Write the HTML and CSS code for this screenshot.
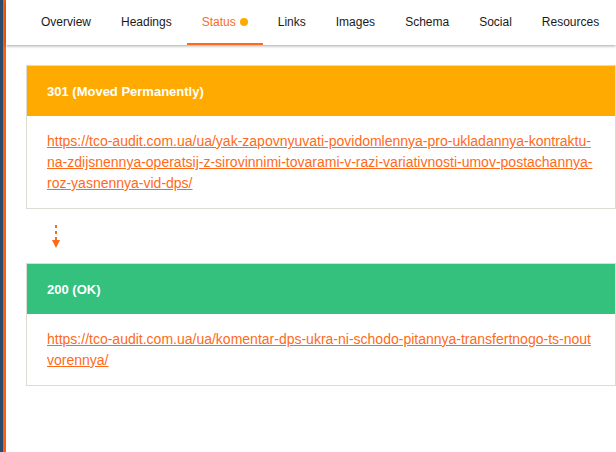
FILE: index.html
```html
<!DOCTYPE html>
<html lang="en">
<head>
  <meta charset="UTF-8" />
  <title>Status | Redirect chain</title>
  <link rel="stylesheet" href="styles.css">
</head>
<body>
  <div class="frame">
    <div class="host-edge"></div>
    <div class="panel">
      <nav class="tabs">
        <a class="tab" href="#">Overview</a>
        <a class="tab" href="#">Headings</a>
        <a class="tab active" href="#">Status <span class="dot"></span></a>
        <a class="tab" href="#">Links</a>
        <a class="tab" href="#">Images</a>
        <a class="tab" href="#">Schema</a>
        <a class="tab" href="#">Social</a>
        <a class="tab" href="#">Resources</a>
      </nav>

      <main class="status-view">
        <div class="hop redirect">
          <div class="hop-head">301 (Moved Permanently)</div>
          <div class="hop-body">
            <a href="#">https://tco-audit.com.ua/ua/yak-zapovnyuvati-povidomlennya-pro-ukladannya-kontraktu-na-zdijsnennya-operatsij-z-sirovinnimi-tovarami-v-razi-variativnosti-umov-postachannya-roz-yasnennya-vid-dps/</a>
          </div>
        </div>

        <!-- redirect arrow between hops -->
        <div class="hop-arrow">
          <svg width="10" height="24" viewBox="0 0 10 24">
            <line x1="5" y1="1" x2="5" y2="16" stroke="#ff6a1a" stroke-width="2" stroke-dasharray="3 3"/>
            <polygon points="1,16 9,16 5,24" fill="#ff6a1a"/>
          </svg>
        </div>

        <div class="hop ok">
          <div class="hop-head">200 (OK)</div>
          <div class="hop-body">
            <a href="#">https://tco-audit.com.ua/ua/komentar-dps-ukra-ni-schodo-pitannya-transfertnogo-ts-noutvorennya/</a>
          </div>
        </div>
      </main>
    </div>
  </div>
</body>
</html>
```

FILE: styles.css
```css
:root {
  --orange: #ff6a1a;
  --amber: #ffaa00;
  --green: #34c07d;
  --text: #1a1a1a;
  --border: #dedbd2;
}

* {
  box-sizing: border-box;
  margin: 0;
  padding: 0;
}

body {
  font-family: "Liberation Sans", Arial, sans-serif;
  background: #fff;
  color: var(--text);
}

.frame {
  display: flex;
  height: 100vh;
  overflow: hidden;
}

.host-edge {
  width: 3px;
  background: #2c4a6c;
}

.panel {
  flex: 1;
  border-left: 3px solid #ff5e0c;
  min-width: 0;
}

.tabs {
  display: flex;
  height: 45px;
  padding-left: 20px;
  box-shadow: 0 1px 3px rgba(0, 0, 0, 0.35);
  white-space: nowrap;
}

.tab {
  display: flex;
  align-items: center;
  padding: 0 15px 0;
  font-size: 12px;
  color: var(--text);
  text-decoration: none;
  border-bottom: 2px solid transparent;
}

.tab.active {
  color: var(--orange);
  border-bottom-color: var(--orange);
}

.dot {
  width: 8px;
  height: 8px;
  margin-left: 4px;
  border-radius: 50%;
  background: var(--amber);
}

.status-view {
  padding: 20px 0 0 20px;
}

.hop {
  border: 1px solid var(--border);
}

.hop-head {
  height: 50px;
  padding: 0 20px;
  display: flex;
  align-items: center;
  color: #fff;
  font-size: 13px;
  font-weight: bold;
}

.redirect .hop-head {
  background: var(--amber);
}

.ok .hop-head {
  background: var(--green);
}

.hop-body {
  padding: 15px 20px 14px;
  font-size: 14px;
  line-height: 21px;
}

.hop-body a {
  color: var(--orange);
  word-break: break-all;
}

.hop-arrow {
  height: 54px;
  padding: 15px 0 0 25px;
}

.hop-arrow svg {
  display: block;
}
```
